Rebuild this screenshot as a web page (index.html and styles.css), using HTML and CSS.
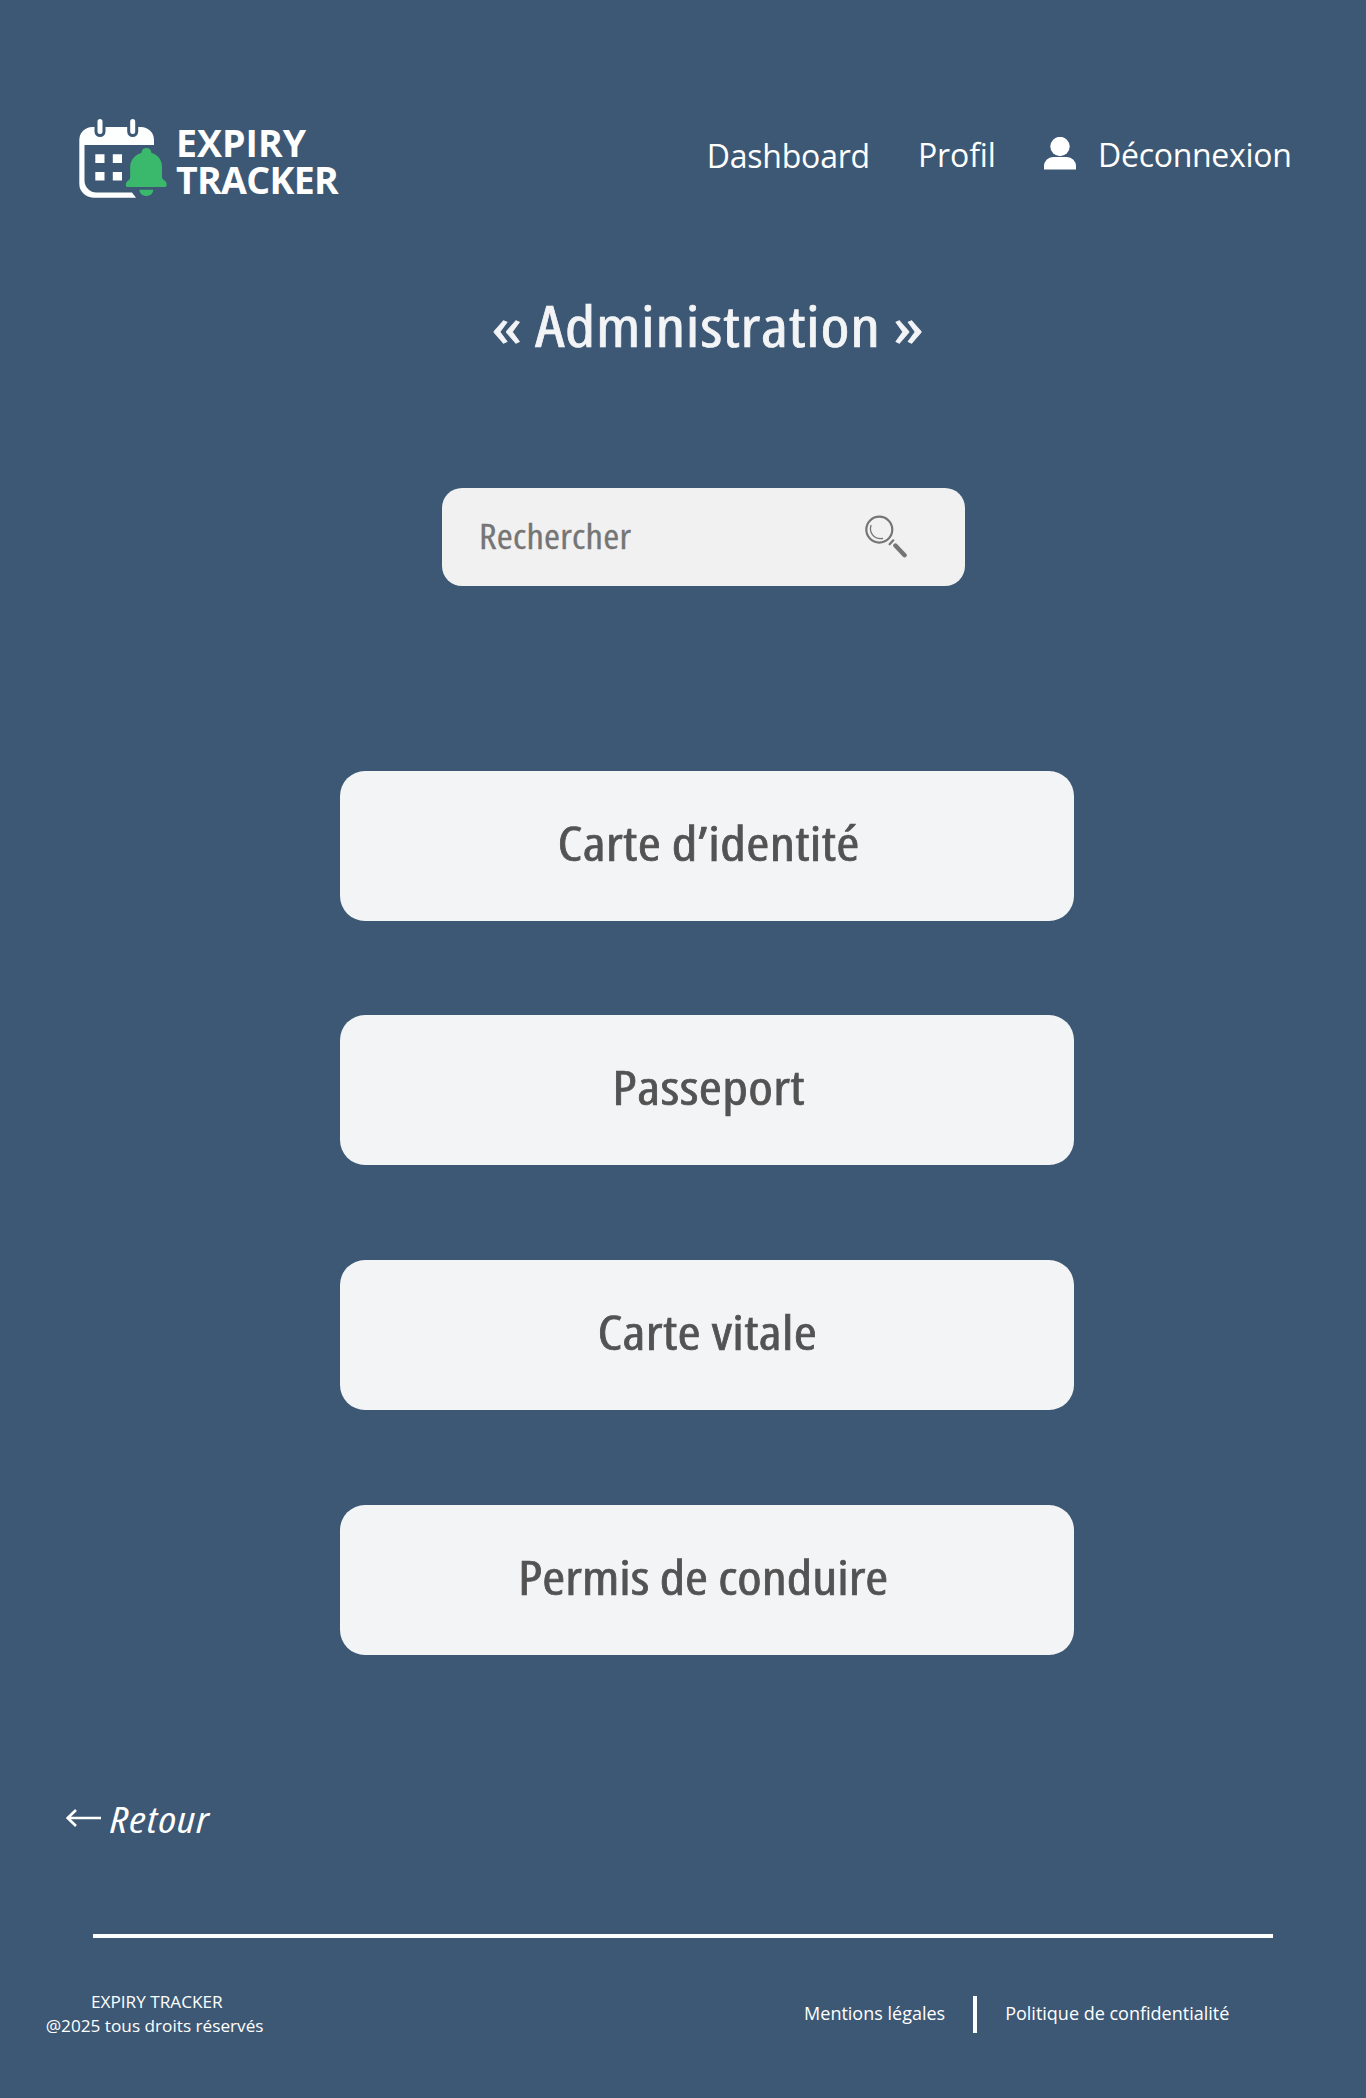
FILE: index.html
```
<!DOCTYPE html>
<html lang="fr">
<head>
<meta charset="utf-8">
<title>Expiry Tracker – Administration</title>
<link rel="stylesheet" href="styles.css">
</head>
<body>
<header class="header">
  <a class="logo">
    <svg class="logo-icon" viewBox="79 118 90 80" width="90" height="80" aria-hidden="true">
      <path class="white" d="M79.300 145V140a13 13 0 0 1 13-13H141a13 13 0 0 1 13 13V145H84.500V180.500a12 12 0 0 0 12 12H132L136 197.700H93.300a14 14 0 0 1-14-14Z"/>
      <path class="notch" d="M100 121V131.500M132.700 121V131.500"/>
      <path class="ring" d="M100 121.500V131.500M132.700 121.500V131.500"/>
      <path class="white" d="M95.300 154.300h9.200v8.600h-9.200zM112.800 154.300h9.200v8.600h-9.200zM95.300 172h9.200v8.600h-9.200zM112.800 172h9.200v8.600h-9.200z"/>
      <path class="green" d="M141.500 152.800a4.900 4.900 0 0 1 9.800 0C158.500 155 162 160.500 162 167V176.500C162 178.800 163 179.700 164.500 180.500C167.300 182 167.500 187 165 187H127.500C125 187 125.300 182 128.200 180.500C129.700 179.700 130.200 178.800 130.200 176.500V167C130.200 160.500 134.500 155 141.500 152.800ZM139.500 189.700H153.200C153.200 198 139.500 198 139.500 189.700Z"/>
    </svg>
    <span class="logo-text">EXPIRY<br><span class="second">TRACKER</span></span>
  </a>
  <nav class="nav">
    <a class="dash">Dashboard</a>
    <a class="profil">Profil</a>
    <a class="logout">
      <svg viewBox="0 0 32 33" width="32" height="33" aria-hidden="true"><circle cx="16" cy="9.500" r="9.700"/><path d="M0 32.600V29a9 9 0 0 1 9-9H23a9 9 0 0 1 9 9V32.600Z"/></svg>
      <span>Déconnexion</span>
    </a>
  </nav>
</header>
<main>
  <h1 class="title"><span>« Administration »</span></h1>
  <div class="search">
    <span>Rechercher</span>
    <svg viewBox="0 0 42 43" width="42" height="43" aria-hidden="true"><circle cx="14.300" cy="14.600" r="13" stroke-width="2.200"/><path d="M6 10.500C3.800 17 8.500 24.500 17.500 23.500" stroke-width="1.300"/><path d="M28.300 25.300L24.600 29.300" stroke-width="2.200"/><path d="M30.400 30.600L39.600 40.200" stroke-width="4.400"/></svg>
  </div>
  <div class="list">
    <a class="card identity"><span>Carte d’identité</span></a>
    <a class="card passport"><span>Passeport</span></a>
    <a class="card vitale"><span>Carte vitale</span></a>
    <a class="card permis"><span>Permis de conduire</span></a>
  </div>
  <a class="back">
    <svg viewBox="0 0 36 18" width="36" height="18" aria-hidden="true"><path d="M1.500 9H35M10 1L1.700 9L10 17"/></svg>
    <span>Retour</span>
  </a>
</main>
<footer class="footer">
  <p class="copy">EXPIRY TRACKER<br>@2025 tous droits réservés<span class="dot">.</span></p>
  <div class="legal">
    <a>Mentions légales</a>
    <a class="privacy">Politique de confidentialité</a>
  </div>
</footer>
</body>
</html>
```
FILE: styles.css
```
* { box-sizing: border-box; }

body {
  margin: 0;
  min-height: 2098px;
  background: #3d5874;
  color: #fff;
  font-family: "Open Sans", sans-serif;
  white-space: nowrap;
}

.header {
  display: flex;
  justify-content: space-between;
  padding: 118px 74.500px 0 79px;
  height: 198px;
}

.logo { display: flex; }
.logo-icon { flex: none; }
.white { fill: #fdfefe; }
.green { fill: #3ab86c; }
.notch { stroke: #3d5874; stroke-width: 11; stroke-linecap: round; }
.ring { stroke: #fdfefe; stroke-width: 5; stroke-linecap: round; }

.logo-text {
  padding: 7px 0 0 7px;
  font-size: 37.500px;
  font-weight: 700;
  line-height: 36.500px;
}
.second { letter-spacing: -0.700px; }

.nav {
  display: flex;
  align-items: flex-start;
  padding-top: 17px;
  font-size: 32px;
  line-height: 40px;
}
.dash { margin: 1px 48px 0 0; letter-spacing: -0.200px; }
.profil { margin-right: 48px; letter-spacing: -0.150px; }
.logout { display: flex; gap: 22.500px; }
.logout span { letter-spacing: -0.300px; }
.logout svg { fill: #fff; margin-top: 2px; }

.title {
  margin: 87px 0 0 49px;
  text-align: center;
  font-size: 57px;
  font-weight: 500;
  font-stretch: 75%;
  line-height: 80px;
  letter-spacing: 0.600px;
  color: #f3f4f6;
  -webkit-text-stroke: 0.700px #f3f4f6;
}
.title span {
  display: inline-block;
  transform: scaleX(1.157);
}

.search {
  display: flex;
  align-items: center;
  justify-content: space-between;
  width: 523px;
  height: 98.500px;
  margin: 122.500px 0 0 441.500px;
  padding: 0 58px 0 37px;
  border-radius: 20px;
  background: #f1f1f1;
  color: #757575;
  font-size: 34px;
  font-stretch: 75%;
}
.search span {
  padding-bottom: 2.500px;
  letter-spacing: 0.200px;
  transform: scaleX(1.136);
  transform-origin: left;
  -webkit-text-stroke: 0.300px #757575;
}
.search svg { fill: none; stroke: #757575; stroke-linecap: round; }

.list {
  display: grid;
  gap: 94.400px;
  width: 734px;
  margin: 184.500px 0 0 340px;
}
.card {
  display: flex;
  align-items: center;
  justify-content: center;
  height: 150.300px;
  padding-bottom: 7px;
  border-radius: 25px;
  background: #f3f4f6;
  color: #535353;
  font-size: 48px;
  font-weight: 500;
  font-stretch: 75%;
  letter-spacing: 0.300px;
  -webkit-text-stroke: 0.700px #535353;
}
.card span { transform: scaleX(1.165); }
.passport { padding-left: 4px; }
.identity { padding-left: 3px; }
.vitale { padding-left: 1px; }
.permis { padding-right: 7px; letter-spacing: 0; }
.permis span { transform: scaleX(1.156); }

.back {
  display: flex;
  align-items: center;
  gap: 8px;
  width: max-content;
  margin: 139.400px 0 0 66px;
  font-size: 36px;
  font-style: italic;
  font-stretch: 75%;
  line-height: 48px;
  letter-spacing: 0.800px;
}
.back span {
  padding-top: 2px;
  margin-bottom: -2px;
  transform: scaleX(1.235);
  transform-origin: left;
}
.back svg { fill: none; stroke: #fff; stroke-width: 2.600; }

.footer {
  display: flex;
  justify-content: space-between;
  margin: 91.500px 92.700px 0;
  padding-top: 51px;
  border-top: 4px solid #fff;
}
.copy {
  margin: 1px 0 0 -47px;
  text-align: center;
  font-size: 17.200px;
  line-height: 24px;
}
.dot { color: #535353; }
.legal {
  display: flex;
  align-items: center;
  height: 37px;
  margin: 7px 44px 0 0;
  font-size: 18px;
}
.legal a { padding-bottom: 3px; }
.legal .privacy {
  display: flex;
  align-items: center;
  height: 37px;
  margin-left: 28px;
  padding-left: 28px;
  border-left: 4px solid #fff;
}
```
